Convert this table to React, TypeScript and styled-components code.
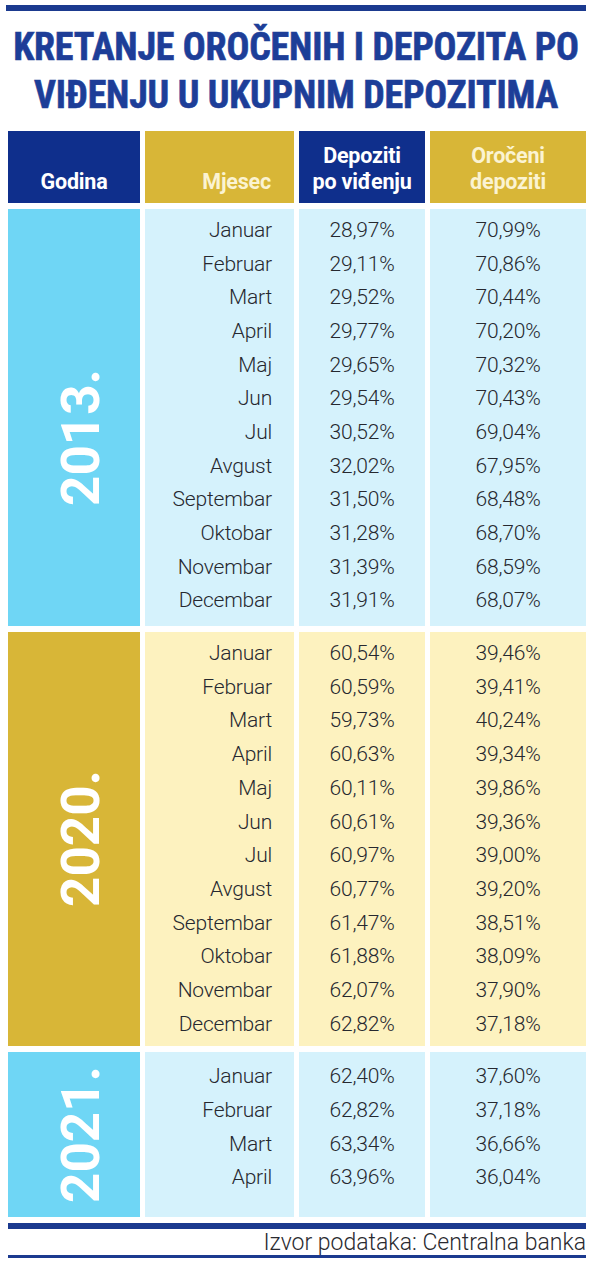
import React from "react";
import styled, { createGlobalStyle } from "styled-components";

const Global = createGlobalStyle`
  html, body { margin: 0; padding: 0; background: #ffffff; }
  body { width: 600px; font-family: Roboto, "Noto Sans", sans-serif; }
`;

type Theme = "blue" | "gold";

const palette = {
  blue: { year: "#6fd6f5", cell: "#d5f2fc" },
  gold: { year: "#d8b637", cell: "#fdf2bf" },
};

const Page = styled.div`
  width: 600px;
  padding: 5px 14px 4px 6px;
  box-sizing: border-box;
  display: flex;
  flex-direction: column;
`;

const TopRule = styled.div`
  height: 6px;
  background: #1b3a8f;
`;

const Title = styled.h1`
  margin: 12px 0 0;
  font-family: "Roboto Condensed", "DejaVu Sans Condensed", Roboto, sans-serif;
  font-stretch: condensed;
  font-weight: 700;
  font-size: 38px;
  line-height: 48px;
  letter-spacing: -0.2px;
  color: #1d3e98;
  -webkit-text-stroke: 0.6px #1d3e98;
  text-align: center;
  text-transform: uppercase;
`;

const Table = styled.div`
  margin: 12px 0 0 2px;
  display: grid;
  grid-template-columns: 132px 149px 126px 156px;
  column-gap: 5px;
  row-gap: 6px;
`;

const HeadCell = styled.div<{ $tone: "blue" | "gold"; $align: "center" | "right" }>`
  height: 72px;
  background: ${(p) => (p.$tone === "blue" ? "#0f2f8c" : "#d8b637")};
  color: ${(p) => (p.$tone === "blue" ? "#ffffff" : "#fbf3d2")};
  display: flex;
  flex-direction: column;
  justify-content: flex-end;
  align-items: ${(p) => (p.$align === "center" ? "center" : "flex-end")};
  padding: 0 ${(p) => (p.$align === "right" ? "23px" : "0")} 8px 0;
  box-sizing: border-box;
  font-family: Roboto, sans-serif;
  font-weight: 700;
  font-size: 21.5px;
  line-height: 26px;
  text-align: center;
  letter-spacing: -0.2px;
`;

const YearCell = styled.div<{ $theme: Theme; $shift: number }>`
  background: ${(p) => palette[p.$theme].year};
  display: flex;
  align-items: center;
  justify-content: center;
  padding-top: ${(p) => p.$shift}px;
  box-sizing: border-box;
`;

const YearText = styled.span`
  writing-mode: vertical-rl;
  transform: rotate(180deg);
  font-family: Roboto, sans-serif;
  font-weight: 700;
  font-size: 53px;
  line-height: 1;
  color: #ffffff;
  margin-left: 14px;
`;

const DataCell = styled.div<{ $theme: Theme; $align: "right" | "center"; $pt: number; $pb: number }>`
  background: ${(p) => palette[p.$theme].cell};
  display: flex;
  flex-direction: column;
  align-items: ${(p) => (p.$align === "right" ? "flex-end" : "center")};
  padding: ${(p) => p.$pt}px ${(p) => (p.$align === "right" ? "22px" : "0")} ${(p) => p.$pb}px 0;
  box-sizing: border-box;
`;

const Line = styled.div`
  height: 33.7px;
  display: flex;
  align-items: center;
  font-family: Roboto, sans-serif;
  font-weight: 300;
  font-size: 21px;
  color: #26282f;
  letter-spacing: -0.2px;
`;

const Footer = styled.div`
  margin-top: 6px;
  margin-left: 2px;
  border-top: 6px solid #1b3a8f;
  border-bottom: 3px solid #1b3a8f;
  display: flex;
  justify-content: flex-end;
  padding: 3px 0 2px;
  font-family: Roboto, sans-serif;
  font-weight: 300;
  font-size: 23px;
  line-height: 21px;
  color: #2a2a30;
`;

type Block = { year: string; theme: Theme; rows: [string, string, string][]; shift: number; pt: number; pb: number };

const months = ["Januar", "Februar", "Mart", "April", "Maj", "Jun", "Jul", "Avgust", "Septembar", "Oktobar", "Novembar", "Decembar"];

const d2013 = [
  ["28,97%", "70,99%"], ["29,11%", "70,86%"], ["29,52%", "70,44%"], ["29,77%", "70,20%"],
  ["29,65%", "70,32%"], ["29,54%", "70,43%"], ["30,52%", "69,04%"], ["32,02%", "67,95%"],
  ["31,50%", "68,48%"], ["31,28%", "68,70%"], ["31,39%", "68,59%"], ["31,91%", "68,07%"],
];
const d2020 = [
  ["60,54%", "39,46%"], ["60,59%", "39,41%"], ["59,73%", "40,24%"], ["60,63%", "39,34%"],
  ["60,11%", "39,86%"], ["60,61%", "39,36%"], ["60,97%", "39,00%"], ["60,77%", "39,20%"],
  ["61,47%", "38,51%"], ["61,88%", "38,09%"], ["62,07%", "37,90%"], ["62,82%", "37,18%"],
];
const d2021 = [
  ["62,40%", "37,60%"], ["62,82%", "37,18%"], ["63,34%", "36,66%"], ["63,96%", "36,04%"],
];

const blocks: Block[] = [
  { year: "2013.", theme: "blue", rows: d2013.map((v, i) => [months[i], v[0], v[1]]), shift: 40, pt: 4, pb: 9 },
  { year: "2020.", theme: "gold", rows: d2020.map((v, i) => [months[i], v[0], v[1]]), shift: 0, pt: 4, pb: 5 },
  { year: "2021.", theme: "blue", rows: d2021.map((v, i) => [months[i], v[0], v[1]]), shift: 0, pt: 8, pb: 23 },
];

export default function App() {
  return (
    <>
      <Global />
      <Page>
        <TopRule />
        <Title>
          Kretanje oročenih i depozita po
          <br />
          viđenju u ukupnim depozitima
        </Title>
        <Table>
          <HeadCell $tone="blue" $align="center">Godina</HeadCell>
          <HeadCell $tone="gold" $align="right">Mjesec</HeadCell>
          <HeadCell $tone="blue" $align="center">
            <span>Depoziti</span>
            <span>po viđenju</span>
          </HeadCell>
          <HeadCell $tone="gold" $align="center">
            <span>Oročeni</span>
            <span>depoziti</span>
          </HeadCell>
          {blocks.map((b) => (
            <React.Fragment key={b.year}>
              <YearCell $theme={b.theme} $shift={b.shift}>
                <YearText>{b.year}</YearText>
              </YearCell>
              <DataCell $theme={b.theme} $align="right" $pt={b.pt} $pb={b.pb}>
                {b.rows.map((r) => (
                  <Line key={r[0]}>{r[0]}</Line>
                ))}
              </DataCell>
              <DataCell $theme={b.theme} $align="center" $pt={b.pt} $pb={b.pb}>
                {b.rows.map((r) => (
                  <Line key={r[0]}>{r[1]}</Line>
                ))}
              </DataCell>
              <DataCell $theme={b.theme} $align="center" $pt={b.pt} $pb={b.pb}>
                {b.rows.map((r) => (
                  <Line key={r[0]}>{r[2]}</Line>
                ))}
              </DataCell>
            </React.Fragment>
          ))}
        </Table>
        <Footer>Izvor podataka: Centralna banka</Footer>
      </Page>
    </>
  );
}
